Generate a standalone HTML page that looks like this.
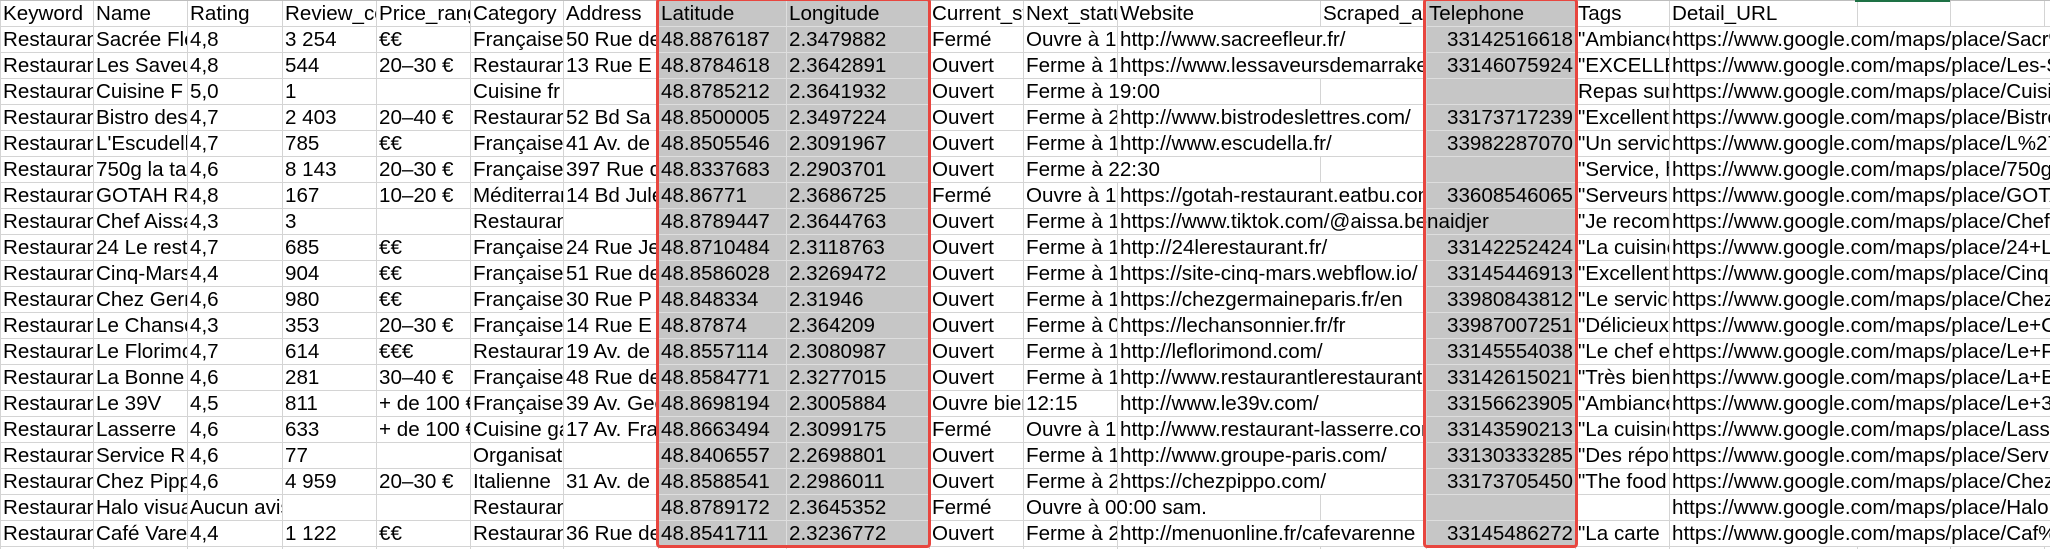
<!DOCTYPE html>
<html><head><meta charset="utf-8">
<style>
html,body{margin:0;padding:0;background:#fff;width:2050px;height:549px;overflow:hidden}
body{position:relative;font-family:"Liberation Sans",Arial,sans-serif;font-size:20.6px;color:#000}
table{position:absolute;left:0;top:0;border-collapse:collapse;table-layout:fixed;width:2060px}
tr{height:26px}
td{border:1px solid #d4d4d4;padding:0 2px;white-space:nowrap;overflow:hidden;line-height:24px;vertical-align:middle;box-sizing:border-box}
td.g{background:#c6c6c6;border-color:#dedede}
td.r{text-align:right}
td.o{overflow:visible}
.box{position:absolute;border:3px solid #e8463f;border-radius:4px;top:-2px;box-sizing:border-box;pointer-events:none}
</style></head><body>
<table>
<colgroup>
<col style="width:93px"><col style="width:94px"><col style="width:95px"><col style="width:94px"><col style="width:94px"><col style="width:93px"><col style="width:95px"><col style="width:128px"><col style="width:143px"><col style="width:94px"><col style="width:94px"><col style="width:203px"><col style="width:106px"><col style="width:149px"><col style="width:94px"><col style="width:188px"><col style="width:93px"><col style="width:94px"><col style="width:16px">
</colgroup>
<tr><td>Keyword</td><td>Name</td><td>Rating</td><td>Review_count</td><td>Price_range</td><td>Category</td><td>Address</td><td class="g">Latitude</td><td class="g">Longitude</td><td>Current_status</td><td>Next_status</td><td>Website</td><td>Scraped_at</td><td class="g">Telephone</td><td>Tags</td><td>Detail_URL</td><td></td><td></td><td></td></tr>
<tr><td>Restaurant</td><td>Sacrée Fleur</td><td>4,8</td><td>3 254</td><td>€€</td><td>Française</td><td>50 Rue des Trois Frères</td><td class="g">48.8876187</td><td class="g">2.3479882</td><td>Fermé</td><td>Ouvre à 12:00</td><td colspan="2">http://www.sacreefleur.fr/</td><td class="g r">33142516618</td><td>"Ambiance</td><td colspan="4">https://www.google.com/maps/place/Sacr%C3%A9e+Fleur</td></tr>
<tr><td>Restaurant</td><td>Les Saveurs</td><td>4,8</td><td>544</td><td>20–30 €</td><td>Restaurant</td><td>13 Rue E</td><td class="g">48.8784618</td><td class="g">2.3642891</td><td>Ouvert</td><td>Ferme à 15:00</td><td colspan="2">https://www.lessaveursdemarrakech.fr/</td><td class="g r">33146075924</td><td>"EXCELLENT</td><td colspan="4">https://www.google.com/maps/place/Les-Saveurs</td></tr>
<tr><td>Restaurant</td><td>Cuisine F</td><td>5,0</td><td>1</td><td></td><td>Cuisine fr</td><td> </td><td class="g">48.8785212</td><td class="g">2.3641932</td><td>Ouvert</td><td colspan="2">Ferme à 19:00</td><td></td><td class="g r"></td><td>Repas sur</td><td colspan="4">https://www.google.com/maps/place/Cuisine</td></tr>
<tr><td>Restaurant</td><td>Bistro des</td><td>4,7</td><td>2 403</td><td>20–40 €</td><td>Restaurant</td><td>52 Bd Sa</td><td class="g">48.8500005</td><td class="g">2.3497224</td><td>Ouvert</td><td>Ferme à 23:00</td><td colspan="2">http://www.bistrodeslettres.com/</td><td class="g r">33173717239</td><td>"Excellent</td><td colspan="4">https://www.google.com/maps/place/Bistro</td></tr>
<tr><td>Restaurant</td><td>L'Escudella</td><td>4,7</td><td>785</td><td>€€</td><td>Française</td><td>41 Av. de</td><td class="g">48.8505546</td><td class="g">2.3091967</td><td>Ouvert</td><td>Ferme à 14:30</td><td colspan="2">http://www.escudella.fr/</td><td class="g r">33982287070</td><td>"Un service</td><td colspan="4">https://www.google.com/maps/place/L%27Escudella</td></tr>
<tr><td>Restaurant</td><td>750g la table</td><td>4,6</td><td>8 143</td><td>20–30 €</td><td>Française</td><td>397 Rue d</td><td class="g">48.8337683</td><td class="g">2.2903701</td><td>Ouvert</td><td colspan="2">Ferme à 22:30</td><td></td><td class="g r"></td><td>"Service, h</td><td colspan="4">https://www.google.com/maps/place/750g</td></tr>
<tr><td>Restaurant</td><td>GOTAH R</td><td>4,8</td><td>167</td><td>10–20 €</td><td>Méditerranéen</td><td>14 Bd Jules</td><td class="g">48.86771</td><td class="g">2.3686725</td><td>Fermé</td><td>Ouvre à 12:00</td><td colspan="2">https://gotah-restaurant.eatbu.com/</td><td class="g r">33608546065</td><td>"Serveurs</td><td colspan="4">https://www.google.com/maps/place/GOTAH</td></tr>
<tr><td>Restaurant</td><td>Chef Aissa</td><td>4,3</td><td>3</td><td></td><td>Restaurant</td><td> </td><td class="g">48.8789447</td><td class="g">2.3644763</td><td>Ouvert</td><td>Ferme à 19:00</td><td colspan="2" class="o">https://www.tiktok.com/@aissa.benaidjer</td><td class="g r"></td><td>"Je recom</td><td colspan="4">https://www.google.com/maps/place/Chef</td></tr>
<tr><td>Restaurant</td><td>24 Le restaurant</td><td>4,7</td><td>685</td><td>€€</td><td>Française</td><td>24 Rue Je</td><td class="g">48.8710484</td><td class="g">2.3118763</td><td>Ouvert</td><td>Ferme à 14:30</td><td colspan="2">http://24lerestaurant.fr/</td><td class="g r">33142252424</td><td>"La cuisine</td><td colspan="4">https://www.google.com/maps/place/24+Le</td></tr>
<tr><td>Restaurant</td><td>Cinq-Mars</td><td>4,4</td><td>904</td><td>€€</td><td>Française</td><td>51 Rue de</td><td class="g">48.8586028</td><td class="g">2.3269472</td><td>Ouvert</td><td>Ferme à 14:30</td><td colspan="2">https://site-cinq-mars.webflow.io/</td><td class="g r">33145446913</td><td>"Excellent</td><td colspan="4">https://www.google.com/maps/place/Cinq</td></tr>
<tr><td>Restaurant</td><td>Chez Germaine</td><td>4,6</td><td>980</td><td>€€</td><td>Française</td><td>30 Rue P</td><td class="g">48.848334</td><td class="g">2.31946</td><td>Ouvert</td><td>Ferme à 14:30</td><td colspan="2">https://chezgermaineparis.fr/en</td><td class="g r">33980843812</td><td>"Le service</td><td colspan="4">https://www.google.com/maps/place/Chez</td></tr>
<tr><td>Restaurant</td><td>Le Chansonnier</td><td>4,3</td><td>353</td><td>20–30 €</td><td>Française</td><td>14 Rue E</td><td class="g">48.87874</td><td class="g">2.364209</td><td>Ouvert</td><td>Ferme à 00:00</td><td colspan="2">https://lechansonnier.fr/fr</td><td class="g r">33987007251</td><td>"Délicieux</td><td colspan="4">https://www.google.com/maps/place/Le+Chansonnier</td></tr>
<tr><td>Restaurant</td><td>Le Florimond</td><td>4,7</td><td>614</td><td>€€€</td><td>Restaurant</td><td>19 Av. de</td><td class="g">48.8557114</td><td class="g">2.3080987</td><td>Ouvert</td><td>Ferme à 14:30</td><td colspan="2">http://leflorimond.com/</td><td class="g r">33145554038</td><td>"Le chef et</td><td colspan="4">https://www.google.com/maps/place/Le+Florimond</td></tr>
<tr><td>Restaurant</td><td>La Bonne</td><td>4,6</td><td>281</td><td>30–40 €</td><td>Française</td><td>48 Rue de</td><td class="g">48.8584771</td><td class="g">2.3277015</td><td>Ouvert</td><td>Ferme à 14:30</td><td colspan="2">http://www.restaurantlerestaurant.fr/</td><td class="g r">33142615021</td><td>"Très bien</td><td colspan="4">https://www.google.com/maps/place/La+Bonne</td></tr>
<tr><td>Restaurant</td><td>Le 39V</td><td>4,5</td><td>811</td><td>+ de 100 €</td><td>Française</td><td>39 Av. George</td><td class="g">48.8698194</td><td class="g">2.3005884</td><td>Ouvre bientôt</td><td>12:15</td><td colspan="2">http://www.le39v.com/</td><td class="g r">33156623905</td><td>"Ambiance</td><td colspan="4">https://www.google.com/maps/place/Le+39V</td></tr>
<tr><td>Restaurant</td><td>Lasserre</td><td>4,6</td><td>633</td><td>+ de 100 €</td><td>Cuisine gastronomique</td><td>17 Av. Franklin</td><td class="g">48.8663494</td><td class="g">2.3099175</td><td>Fermé</td><td>Ouvre à 19:00</td><td colspan="2">http://www.restaurant-lasserre.com/</td><td class="g r">33143590213</td><td>"La cuisine</td><td colspan="4">https://www.google.com/maps/place/Lasserre</td></tr>
<tr><td>Restaurant</td><td>Service R</td><td>4,6</td><td>77</td><td></td><td>Organisateur</td><td> </td><td class="g">48.8406557</td><td class="g">2.2698801</td><td>Ouvert</td><td>Ferme à 18:00</td><td colspan="2">http://www.groupe-paris.com/</td><td class="g r">33130333285</td><td>"Des répo</td><td colspan="4">https://www.google.com/maps/place/Service</td></tr>
<tr><td>Restaurant</td><td>Chez Pippo</td><td>4,6</td><td>4 959</td><td>20–30 €</td><td>Italienne</td><td>31 Av. de</td><td class="g">48.8588541</td><td class="g">2.2986011</td><td>Ouvert</td><td>Ferme à 23:00</td><td colspan="2">https://chezpippo.com/</td><td class="g r">33173705450</td><td>"The food</td><td colspan="4">https://www.google.com/maps/place/Chez+Pippo</td></tr>
<tr><td>Restaurant</td><td>Halo visuals</td><td>Aucun avis</td><td></td><td></td><td>Restaurant</td><td> </td><td class="g">48.8789172</td><td class="g">2.3645352</td><td>Fermé</td><td colspan="2">Ouvre à 00:00 sam.</td><td></td><td class="g r"></td><td></td><td colspan="4">https://www.google.com/maps/place/Halo</td></tr>
<tr><td>Restaurant</td><td>Café Varenne</td><td>4,4</td><td>1 122</td><td>€€</td><td>Restaurant</td><td>36 Rue de</td><td class="g">48.8541711</td><td class="g">2.3236772</td><td>Ouvert</td><td>Ferme à 23:00</td><td colspan="2">http://menuonline.fr/cafevarenne</td><td class="g r">33145486272</td><td>"La carte</td><td colspan="4">https://www.google.com/maps/place/Caf%C3%A9</td></tr>
<tr><td></td><td></td><td></td><td></td><td></td><td></td><td></td><td></td><td></td><td></td><td></td><td></td><td></td><td></td><td></td><td></td><td></td><td></td><td></td></tr>
</table>
<div style="position:absolute;left:0;top:0;width:2050px;height:1px;background:#bdbdbd"></div>
<div style="position:absolute;left:1855px;top:0;width:95px;height:2px;background:#1e7145"></div>
<div class="box" style="left:656px;width:275px;height:550px"></div>
<div class="box" style="left:1423px;width:155px;height:550px"></div>
</body></html>
